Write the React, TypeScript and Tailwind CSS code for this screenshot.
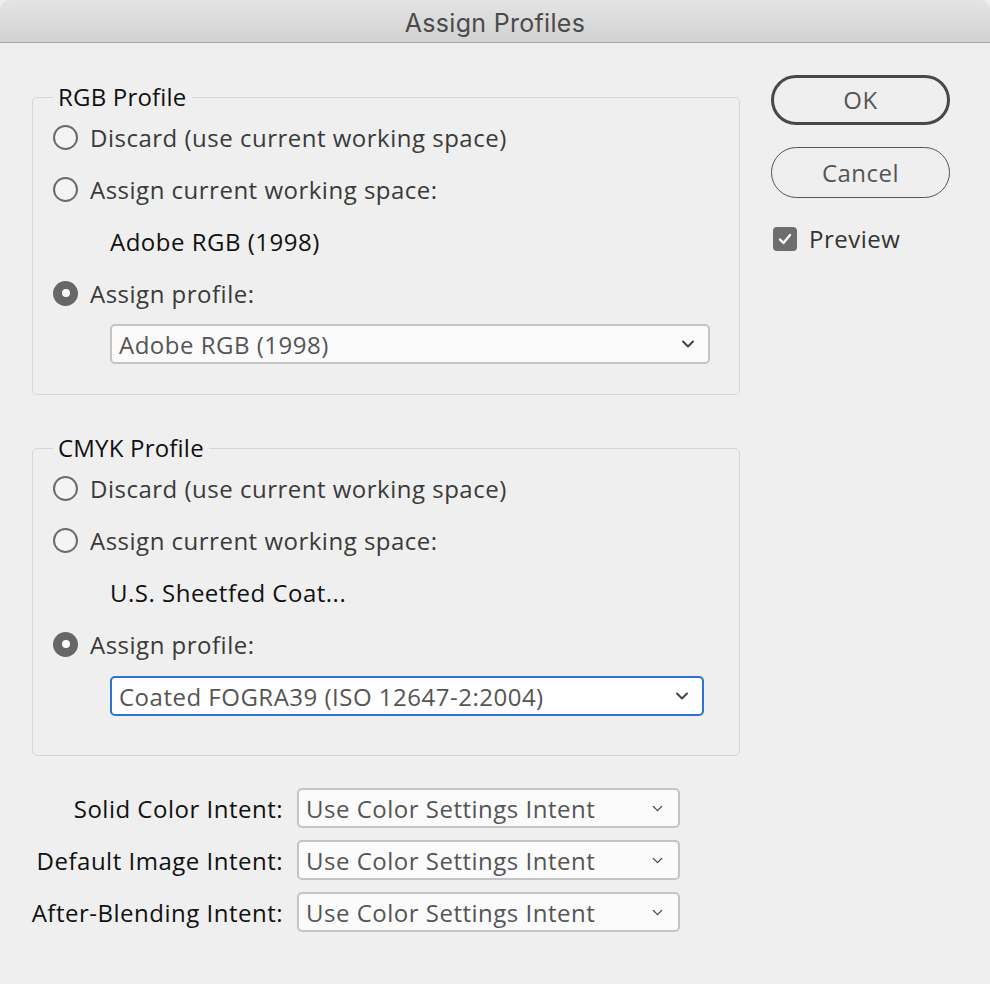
import { ChevronDown } from 'lucide-react';

function Radio({ checked, label }: { checked?: boolean; label: string }) {
  return (
    <div className="flex h-[52px] items-center">
      <span
        className={
          'ml-[20px] flex h-[25px] w-[25px] items-center justify-center rounded-full ' +
          (checked ? 'bg-[#676767]' : 'border-[2px] border-[#6b6b6b] bg-[#f4f4f4]')
        }
      >
        {checked && <span className="h-[8px] w-[8px] rounded-full bg-white" />}
      </span>
      <span className="ml-[12px] pt-[2px] text-[#3a3a3a]">{label}</span>
    </div>
  );
}

function Select({ value, focus, width, big }: { value: string; focus?: boolean; width: string; big?: boolean }) {
  return (
    <div
      className={
        'flex h-[40px] items-center justify-between rounded-[5px] pl-[7px] ' +
        width + ' ' +
        (focus ? 'border-[2px] border-[#2d73d2] bg-white' : 'border-[2px] border-[#c4c4c4] bg-[#fbfbfb]') +
        (big ? ' pr-[10px]' : ' pr-[12px]')
      }
    >
      <span className="pt-[2px] text-[#555555]">{value}</span>
      <ChevronDown
        size={big ? 20 : 17}
        strokeWidth={big ? 2.4 : 1.8}
        className="text-[#444444]"
      />
    </div>
  );
}

function Group({ title, children, pb }: { title: string; children: React.ReactNode; pb: string }) {
  return (
    <fieldset className={'w-[708px] rounded-[5px] border border-[#d6d6d6] px-0 ' + pb}>
      <legend className="ml-[20px] px-[5px] leading-[28px] tracking-[0.2px] text-[#111111]">{title}</legend>
      {children}
    </fieldset>
  );
}

export default function App() {
  return (
    <div className="h-[984px] w-[990px] overflow-hidden bg-[#efefef] font-['Open_Sans',sans-serif] text-[24px] leading-[32px] tracking-[0.5px]">
      <div className="flex h-[43px] items-center justify-center rounded-t-[10px] border-b border-[#a9a9a9] bg-gradient-to-b from-[#e4e4e4] to-[#d2d2d2] pt-[3px]">
        <span className="font-['Inter',sans-serif] text-[25px] tracking-[0.3px] text-[#4b4b4b]">Assign Profiles</span>
      </div>

      <div className="flex pl-[32px] pt-[40px]">
        <div className="flex flex-col">
          <Group title="RGB Profile" pb="pb-[30px]">
            <Radio label="Discard (use current working space)" />
            <Radio label="Assign current working space:" />
            <div className="flex h-[52px] items-center pl-[77px] pt-[2px] text-[#111111]">Adobe RGB (1998)</div>
            <Radio checked label="Assign profile:" />
            <div className="mt-[5px] pl-[77px]">
              <Select big value="Adobe RGB (1998)" width="w-[600px]" />
            </div>
          </Group>

          <div className="mt-[39px]">
            <Group title="CMYK Profile" pb="pb-[39px]">
              <Radio label="Discard (use current working space)" />
              <Radio label="Assign current working space:" />
              <div className="flex h-[52px] items-center pl-[77px] pt-[2px] text-[#111111]">U.S. Sheetfed Coat...</div>
              <Radio checked label="Assign profile:" />
              <div className="mt-[6px] pl-[77px]">
                <Select big focus value="Coated FOGRA39 (ISO 12647-2:2004)" width="w-[594px]" />
              </div>
            </Group>
          </div>

          <div className="mt-[32px] grid grid-cols-[251px_383px] gap-x-[14px] gap-y-[12px]">
            {['Solid Color Intent:', 'Default Image Intent:', 'After-Blending Intent:'].map(l => (
              <div key={l} className="contents">
                <div className="flex h-[40px] items-center justify-end whitespace-nowrap pt-[2px] text-[#111111]">{l}</div>
                <Select value="Use Color Settings Intent" width="w-[383px]" />
              </div>
            ))}
          </div>
        </div>

        <div className="ml-[31px] flex flex-col">
          <button className="-mt-[8px] h-[50px] w-[179px] rounded-full border-[3px] border-[#484848] text-[#555555]">OK</button>
          <button className="mt-[22px] h-[51px] w-[179px] rounded-full border-[1.5px] border-[#555555] text-[#555555]">Cancel</button>
          <div className="mt-[25px] flex items-center pl-[2px]">
            <span className="flex h-[24px] w-[24px] items-center justify-center rounded-[4px] bg-[#6d6d6d]">
              <svg width="16" height="16" viewBox="0 0 16 16" fill="none">
                <path d="M3 8.5 L6.5 12 L13 4" stroke="white" strokeWidth="2.4" strokeLinecap="round" strokeLinejoin="round" />
              </svg>
            </span>
            <span className="ml-[12px] text-[#333333]">Preview</span>
          </div>
        </div>
      </div>
    </div>
  );
}
